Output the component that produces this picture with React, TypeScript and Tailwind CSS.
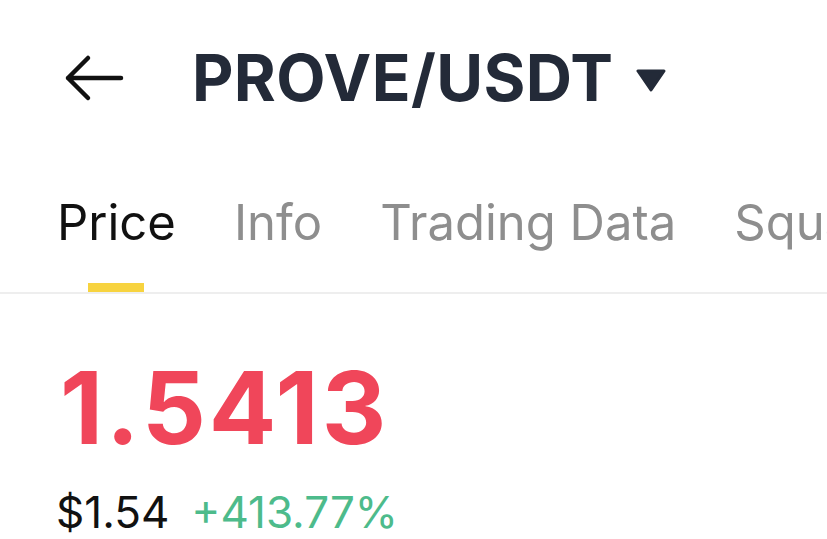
const tabs = ['Price', 'Info', 'Trading Data', 'Square']

const App = () => {
    return (
        <div className="w-[827px] h-[539px] bg-white overflow-hidden font-['Inter','Noto_Sans',sans-serif]">
            <div className="flex items-center h-[160px] pl-[63px] pb-[4px]">
                <svg width="62" height="48" viewBox="0 0 62 48" fill="none">
                    <path d="M5 24 H58 M25 4 L5 24 L25 44" stroke="#111" strokeWidth="4.5" strokeLinecap="round" strokeLinejoin="round" />
                </svg>
                <div className="ml-[67px] text-[64px] font-bold text-[#232a38] tracking-[0.4px]">PROVE/USDT</div>
                <svg width="30" height="23" viewBox="0 0 30 23" className="ml-[23px] mt-[4px]">
                    <path d="M2 2 H28 L15 21 Z" fill="#232a38" stroke="#232a38" strokeWidth="3" strokeLinejoin="round" />
                </svg>
            </div>
            <div className="flex gap-[58px] pl-[57px] whitespace-nowrap border-b-2 border-[#eeeeee]">
                {tabs.map((t, i) => (
                    <div key={t} className="flex flex-col items-center">
                        <div className={`text-[49px] leading-[64px] mt-[31px] ${i === 0 ? 'text-[#111]' : 'text-[#8e8e8e]'}`}>{t}</div>
                        <div className={`w-[56px] h-[9px] mt-[28px] ${i === 0 ? 'bg-[#f7d33f]' : 'bg-transparent'}`}></div>
                    </div>
                ))}
            </div>
            <div className="pl-[60px] pt-[59px]">
                <div className="text-[100px] leading-[110px] font-bold text-[#f0465a] tracking-[3px]">1.5413</div>
                <div className="flex items-baseline gap-[22px] mt-[16px] text-[44px] -ml-[4px]">
                    <span className="text-[#111]">$1.54</span>
                    <span className="text-[#4dbb8b]">+413.77%</span>
                </div>
            </div>
        </div>
    );
};

export default App;
